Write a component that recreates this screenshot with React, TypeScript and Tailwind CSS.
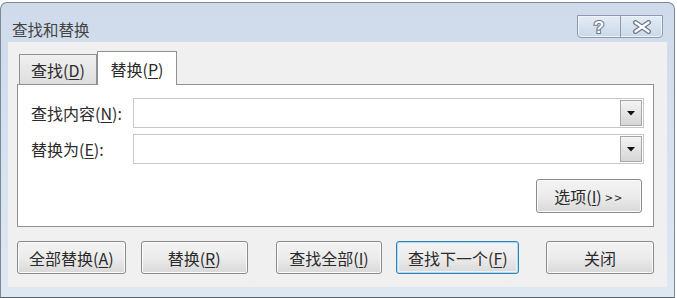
import React from "react"

const font = "font-['Noto_Sans_CJK_SC','Liberation_Sans',sans-serif]"

function Key({ children }: { children: React.ReactNode }) {
  return <span className="underline underline-offset-2 decoration-1">{children}</span>
}

function Btn({
  children,
  w,
  className = "",
  primary = false,
}: {
  children: React.ReactNode
  w: string
  className?: string
  primary?: boolean
}) {
  return (
    <button
      className={`${w} h-[33px] rounded-[3px] border text-[16px] leading-none text-[#2b2b2b] bg-gradient-to-b from-[#f3f3f3] via-[#ececec] to-[#d9d9d9] ${
        primary
          ? "border-[#3c7fb1] shadow-[inset_0_0_0_1px_#a8dcf4,inset_0_0_0_2px_#e8f4fb]"
          : "border-[#8a8a8a] shadow-[inset_0_0_0_1px_#fbfbfb]"
      } ${className}`}
    >
      {children}
    </button>
  )
}

function Combo() {
  return (
    <div className="flex-1 h-[30px] border border-[#c4c7cc] bg-white flex justify-end p-px">
      <div className="w-[22px] h-full border border-[#a6a6a6] bg-gradient-to-b from-[#f4f4f4] to-[#d6d6d6] flex items-center justify-center">
        <svg width="8" height="5" viewBox="0 0 8 5">
          <path d="M0 0 H8 L4 4.5 Z" fill="#111" />
        </svg>
      </div>
    </div>
  )
}

export default function App() {
  return (
    <div className={`w-[677px] h-[298px] bg-white ${font}`}>
      <div className="mt-[2px] w-[675px] h-[296px] rounded-t-[7px] border border-[#7c8896] border-b-[#5a5f66] bg-gradient-to-b from-[#cfdbea] to-[#dde8f3] flex flex-col">
        {/* title bar */}
        <div className="h-[39px] flex items-start justify-between">
          <div className="pl-[11px] pt-[16px] text-[15.5px] leading-[20px] text-[#444]">查找和替换</div>
          <div className="mt-[12px] mr-[11px] flex h-[23px] rounded-b-[4px] border border-[#8d9bb0] bg-gradient-to-b from-[#e4ecf6] to-[#cad8e9] shadow-[inset_0_0_0_1px_#eef3f9]">
            <div className="w-[43px] h-full flex items-center justify-center border-r border-[#8d9bb0]">
              <svg width="16" height="20" viewBox="0 0 16 20">
                <text
                  x="8"
                  y="16"
                  textAnchor="middle"
                  fontSize="17"
                  fontWeight="bold"
                  fontFamily="Liberation Sans, sans-serif"
                  fill="#ffffff"
                  stroke="#6a7a90"
                  strokeWidth="2.2"
                  paintOrder="stroke"
                >
                  ?
                </text>
              </svg>
            </div>
            <div className="w-[41px] h-full flex items-center justify-center">
              <svg width="20" height="14" viewBox="0 0 20 14">
                <path d="M3.5 2.5 L16.5 11.5 M16.5 2.5 L3.5 11.5" stroke="#6a7a90" strokeWidth="5" strokeLinecap="round" />
                <path d="M3.5 2.5 L16.5 11.5 M16.5 2.5 L3.5 11.5" stroke="#ffffff" strokeWidth="2.4" strokeLinecap="round" />
              </svg>
            </div>
          </div>
        </div>

        {/* body */}
        <div className="ml-[7px] mr-[7px] h-[245px] bg-[#f0f0f0] pl-[9px] pr-[13px] pt-[9px] text-[#2b2b2b]">
          {/* tabs */}
          <div className="flex items-end pl-[2px] h-[33px]">
            <div className="w-[78px] h-[30px] border border-b-0 border-[#8e9196] bg-gradient-to-b from-[#f0f0f0] to-[#dedede] flex items-center justify-center text-[16px] leading-none">
              查找(<Key>D</Key>)
            </div>
            <div className="relative z-10 -mb-px w-[80px] h-[34px] border border-b-0 border-[#8e9196] bg-white flex items-center justify-center text-[16px] leading-none">
              替换(<Key>P</Key>)
            </div>
          </div>

          {/* panel */}
          <div className="h-[143px] border border-[#8e9196] bg-white pt-[13px] pl-[13px] pr-[9px] pb-[13px] flex flex-col">
            <div className="flex items-center h-[30px]">
              <div className="w-[102px] text-[16px] leading-none">
                查找内容(<Key>N</Key>):
              </div>
              <Combo />
            </div>
            <div className="flex items-center h-[30px] mt-[6px]">
              <div className="w-[102px] text-[16px] leading-none">
                替换为(<Key>E</Key>):
              </div>
              <Combo />
            </div>
            <div className="flex justify-end mt-[15px] mr-[2px]">
              <Btn w="w-[106px]" className="h-[34px]">
                选项(<Key>I</Key>) <span className="text-[13px] tracking-[2px]">&gt;&gt;</span>
              </Btn>
            </div>
          </div>

          {/* bottom buttons */}
          <div className="flex mt-[14px]">
            <Btn w="w-[109px]">
              全部替换(<Key>A</Key>)
            </Btn>
            <Btn w="w-[107px]" className="ml-[15px]">
              替换(<Key>R</Key>)
            </Btn>
            <Btn w="w-[107px]" className="ml-[28px]">
              查找全部(<Key>I</Key>)
            </Btn>
            <Btn w="w-[123px]" className="ml-[14px]" primary>
              查找下一个(<Key>F</Key>)
            </Btn>
            <Btn w="w-[108px]" className="ml-[27px]">
              关闭
            </Btn>
          </div>
        </div>
      </div>
    </div>
  )
}
